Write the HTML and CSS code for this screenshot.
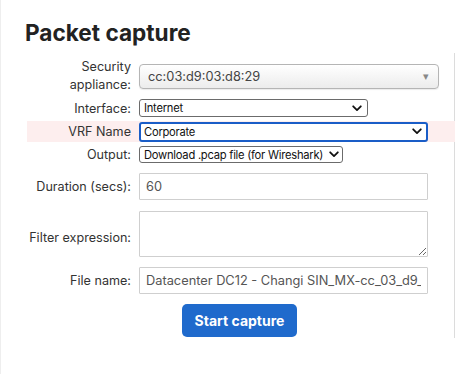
FILE: index.html
```html
<!DOCTYPE html>
<html>
<head>
<meta charset="utf-8">
<link rel="stylesheet" href="styles.css">
</head>
<body>
<div class="page">
  <h1 class="title">Packet capture</h1>
  <form class="form">
    <div class="row r1">
      <label class="lbl">Security<br>appliance:</label>
      <div class="fancy-select">
        <span>cc:03:d9:03:d8:29</span>
        <span class="tri">&#9662;</span>
      </div>
    </div>
    <div class="row r2">
      <label class="lbl">Interface:</label>
      <div class="nsel w-if"><span>Internet</span>
        <svg class="chev" width="10" height="7" viewBox="0 0 10 7"><path d="M1.2 1.3 L5 5.1 L8.8 1.3" fill="none" stroke="#111" stroke-width="1.8" stroke-linecap="round" stroke-linejoin="round"/></svg>
      </div>
    </div>
    <div class="row r3 hl">
      <label class="lbl">VRF Name</label>
      <div class="nsel focus w-vrf"><span>Corporate</span>
        <svg class="chev" width="10" height="7" viewBox="0 0 10 7"><path d="M1.2 1.3 L5 5.1 L8.8 1.3" fill="none" stroke="#111" stroke-width="1.8" stroke-linecap="round" stroke-linejoin="round"/></svg>
      </div>
    </div>
    <div class="row r4">
      <label class="lbl">Output:</label>
      <div class="nsel w-out"><span>Download .pcap file (for Wireshark)</span>
        <svg class="chev" width="10" height="7" viewBox="0 0 10 7"><path d="M1.2 1.3 L5 5.1 L8.8 1.3" fill="none" stroke="#111" stroke-width="1.8" stroke-linecap="round" stroke-linejoin="round"/></svg>
      </div>
    </div>
    <div class="row r5">
      <label class="lbl">Duration (secs):</label>
      <input class="inp" type="text" value="60">
    </div>
    <div class="row r6">
      <label class="lbl lbl-ta">Filter expression:</label>
      <textarea class="ta"></textarea>
    </div>
    <div class="row r7">
      <label class="lbl">File name:</label>
      <input class="inp" type="text" value="Datacenter DC12 - Changi SIN_MX-cc_03_d9_03_d8_29">
    </div>
    <div class="btn-row">
      <button type="button" class="btn">Start capture</button>
    </div>
  </form>
</div>
</body>
</html>
```

FILE: styles.css
```css
html, body {
  margin: 0;
  padding: 0;
  background: #fff;
}
body {
  font-family: Inter, "Noto Sans", sans-serif;
  color: #333;
}
.page {
  height: 374px;
  border-left: 1px solid #eeeeee;
  box-sizing: border-box;
  overflow: hidden;
}
.title {
  margin: 0;
  padding: 19px 0 0 24px;
  height: 34px;
  font-size: 22.6px;
  line-height: 28px;
  font-weight: 700;
  color: #222;
}
.form {
  margin: 0 0 0 26px;
  width: 428px;
  box-sizing: border-box;
  border-right: 1px solid #dcdcdc;
  padding: 5px 0 1px 0;
}
.row {
  display: grid;
  grid-template-columns: 104px 1fr;
  column-gap: 8px;
  align-items: center;
}
.lbl {
  text-align: right;
  font-size: 12.6px;
  line-height: 18px;
  color: #333;
  white-space: nowrap;
  padding-top: 1px;
}
.lbl-ta { padding-top: 7px; }
.r1 .lbl { white-space: normal; padding-top: 0; }
.r1 { height: 36px; }
.r2 { height: 22px; margin-top: 3px; }
.r3 { height: 21px; margin-top: 2px; }
.r4 { height: 21px; margin-top: 2px; }
.r5 { height: 31px; margin-top: 6px; }
.r6 { height: 50px; margin-top: 7px; }
.r7 { height: 31px; margin-top: 6px; }
.hl {
  background: #fdeeee;
  margin-right: -1px;
}
.fancy-select {
  width: 300px;
  height: 25px;
  box-sizing: border-box;
  border: 1px solid #b5b5b5;
  border-radius: 4px;
  background: linear-gradient(#ffffff, #ececec);
  box-shadow: 0 1px 1px rgba(0,0,0,0.08);
  display: flex;
  align-items: center;
  justify-content: space-between;
  padding: 0 9px 0 8px;
  font-size: 12.8px;
  color: #444;
}
.tri {
  font-size: 11px;
  color: #888;
}
.nsel {
  box-sizing: border-box;
  border: 1px solid #6b6b6b;
  border-radius: 3px;
  background: #fff;
  display: flex;
  align-items: center;
  justify-content: space-between;
  padding: 0 5px 0 4px;
  font-size: 11.2px;
  letter-spacing: -0.25px;
  color: #111;
  white-space: nowrap;
}
.w-if { width: 229px; height: 18px; }
.w-vrf { width: 289px; height: 20px; }
.w-out { width: 204px; height: 17px; padding-right: 3px; }
.focus {
  border: 2px solid #1a5dc7;
  padding-left: 3px;
  padding-right: 4px;
}
.chev { display: block; flex: none; }
.inp {
  width: 289px;
  height: 27px;
  box-sizing: border-box;
  border: 1px solid #cfcfcf;
  border-radius: 1px;
  padding: 0 6px;
  font-family: Inter, "Noto Sans", sans-serif;
  font-size: 12.8px;
  color: #555;
  outline: none;
  margin: 0;
}
.ta {
  width: 289px;
  height: 46px;
  box-sizing: border-box;
  border: 1px solid #cfcfcf;
  border-radius: 1px;
  margin: 0;
  padding: 4px 6px;
  font-family: Inter, "Noto Sans", sans-serif;
  font-size: 13px;
}
.btn-row {
  display: flex;
  justify-content: center;
  margin-top: 8px;
  padding-right: 2px;
}
.btn {
  width: 115px;
  height: 33px;
  border: none;
  border-radius: 5px;
  background: #1f6acc;
  color: #fff;
  font-family: Inter, "Noto Sans", sans-serif;
  font-weight: 700;
  font-size: 14px;
  padding: 0;
}
```
